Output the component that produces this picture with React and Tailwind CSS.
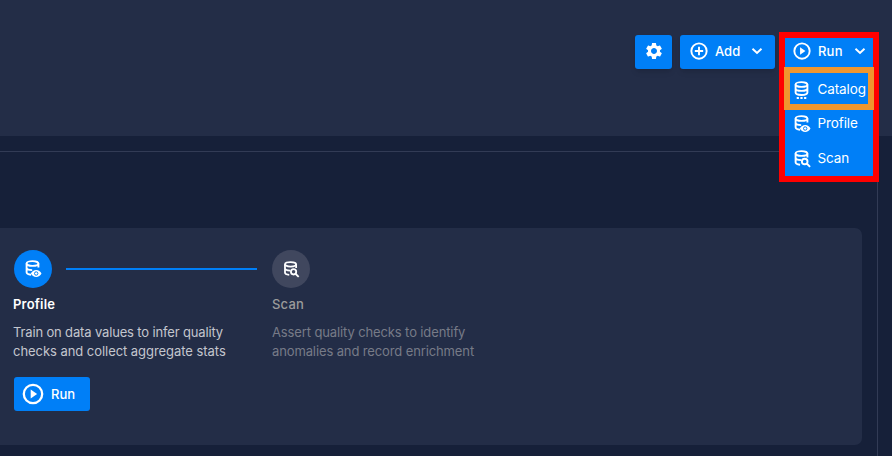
import React from "react";
import { MdSettings } from "react-icons/md";

function Database({ kind, className }) {
  return (
    <svg viewBox="0 0 16 18" className={className} fill="none" stroke="currentColor" strokeWidth="1.9">
      <ellipse cx="7" cy="3.5" rx="5.9" ry="2.4" />
      {kind === "catalog" ? (
        <>
          <path d="M1.1 3.5v8.1c0 1.4 2.6 2.4 5.9 2.4s5.9-1 5.9-2.4v-8.1M1.1 7.5c0 1.4 2.6 2.4 5.9 2.4s5.9-1 5.9-2.4" />
          <path d="M2.2 17h2.2M5.9 17h2.2M9.6 17h2.2" />
        </>
      ) : (
        <path d="M1.1 3.5v8.8c0 1.3 1.7 2.2 4.500 2.400M12.900 3.500v4M1.100 7.800c0 1.400 2.400 2.300 5.600 2.300" />
      )}
      {kind === "profile" && (
        <>
          <path
            d="M5.400 13.500c1.100-2.300 3-3.500 5.300-3.500s4.200 1.200 5.300 3.500c-1.100 2.300-3 3.500-5.300 3.500s-4.200-1.200-5.300-3.500Z"
            fill="currentColor"
            stroke="none"
          />
          <circle cx="10.7" cy="13.5" r="1.7" className="stroke-[#007ff7]" strokeWidth="1" />
        </>
      )}
      {kind === "scan" && (
        <>
          <circle cx="10.2" cy="11.5" r="2.8" />
          <path d="m12.200 13.500 3.400 3.400" />
        </>
      )}
    </svg>
  );
}

function CircleIcon({ kind, className }) {
  return (
    <svg viewBox="0 0 24 24" className={className} fill="none" stroke="currentColor" strokeWidth="2.3">
      <circle cx="12" cy="12" r="9.2" />
      {kind === "play" ? (
        <path d="m9.700 7.400 6.400 4.600-6.400 4.600Z" fill="currentColor" stroke="none" />
      ) : (
        <path d="M12 7v10M7 12h10" />
      )}
    </svg>
  );
}

function Chevron() {
  return (
    <svg viewBox="0 0 12 8" className="h-[8px] w-[12px]" fill="none" stroke="currentColor" strokeWidth="1.9">
      <path d="m1.500 1.700 4.500 4.300 4.500-4.300" />
    </svg>
  );
}

function MenuItem({ kind, label, className }) {
  return (
    <div className={`flex items-center gap-[6.5px] pl-[9px] ${className}`}>
      <Database kind={kind} className="mt-[2px] h-[18px] w-[17px] shrink-0" />
      <span className="tracking-[-0.1px]">{label}</span>
    </div>
  );
}

function RunMenu() {
  return (
    <div className="absolute top-[32px] left-[779px] h-[150px] w-[100px] border-6 border-[#ff0000] bg-[#007ff7] text-[13.5px] leading-[20px]">
      <div className="flex h-[26px] items-center pl-[7px] font-medium">
        <CircleIcon kind="play" className="size-[20px]" />
        <span className="ml-[6px] w-[36px] text-[13px] tracking-[0.2px]">Run</span>
        <Chevron />
      </div>
      <MenuItem kind="catalog" label="Catalog" className="mt-[15px] h-[20px]" />
      <MenuItem kind="profile" label="Profile" className="mt-[14px] h-[20px]" />
      <MenuItem kind="scan" label="Scan" className="mt-[15px] h-[20px]" />
      <div className="absolute top-[29px] left-[-1px] h-[43px] w-[90px] border-6 border-[#f0962e]" />
    </div>
  );
}

export default function App() {
  return (
    <div className="relative flex h-[456px] w-[892px] flex-col overflow-hidden bg-[#162039] font-['Inter',sans-serif] text-white">
      <header className="flex h-[136px] shrink-0 items-start gap-[8px] bg-[#232d47] pt-[35px] pl-[635px]">
        <button className="flex h-[34px] w-[37px] items-center justify-center rounded-[3px] bg-[#007ff7] pb-[2px] shadow-md">
          <MdSettings className="size-[20px]" />
        </button>
        <button className="flex h-[34px] w-[95px] items-center rounded-[3px] bg-[#007ff7] pb-[2px] pl-[9px] text-[13px] font-medium shadow-md">
          <CircleIcon kind="plus" className="size-[20px]" />
          <span className="mt-[2px] ml-[6px] w-[36px] text-left">Add</span>
          <Chevron />
        </button>
      </header>
      <main className="mt-[15px] mr-[14px] flex-1 border-t border-r border-[#323b55] pt-[76px]">
        <section className="mr-[15px] flex h-[217px] rounded-r-[7px] bg-[#232d47] pt-[22px] pl-[13px]">
          <div className="w-[259px]">
            <div className="flex items-center">
              <span className="ml-[1px] flex size-[38px] shrink-0 items-center justify-center rounded-full bg-[#007ff7]">
                <Database kind="profile" className="h-[18px] w-[17px]" />
              </span>
              <span className="ml-[14px] h-[2px] w-[191px] bg-[#007ff7]" />
            </div>
            <h2 className="mt-[6px] text-[13px] leading-[20px] font-semibold tracking-[0.2px]">Profile</h2>
            <p className="mt-[9px] text-[13px] leading-[19px] whitespace-nowrap text-[#c3c6ce]">
              <span className="tracking-[-0.15px]">Train on data values to infer quality</span>
              <br />
              <span className="tracking-[-0.05px]">checks and collect aggregate stats</span>
            </p>
            <button className="mt-[16px] ml-[1px] flex h-[34px] w-[76px] items-center rounded-[3px] bg-[#007ff7] pl-[7px] text-[13px] font-medium">
              <CircleIcon kind="play" className="mb-[1px] size-[24px]" />
              <span className="mt-[1px] ml-[6px]">Run</span>
            </button>
          </div>
          <div>
            <span className="flex size-[38px] items-center justify-center rounded-full bg-[#40475e]">
              <Database kind="scan" className="ml-[1px] h-[17px] w-[17px]" />
            </span>
            <h2 className="mt-[6px] text-[13px] leading-[20px] font-medium tracking-[0.2px] text-[#9b9b9b]">Scan</h2>
            <p className="mt-[9px] text-[13px] leading-[19px] tracking-[-0.12px] whitespace-nowrap text-[#777b87]">
              Assert quality checks to identify
              <br />
              anomalies and record enrichment
            </p>
          </div>
        </section>
      </main>
      <RunMenu />
    </div>
  );
}
